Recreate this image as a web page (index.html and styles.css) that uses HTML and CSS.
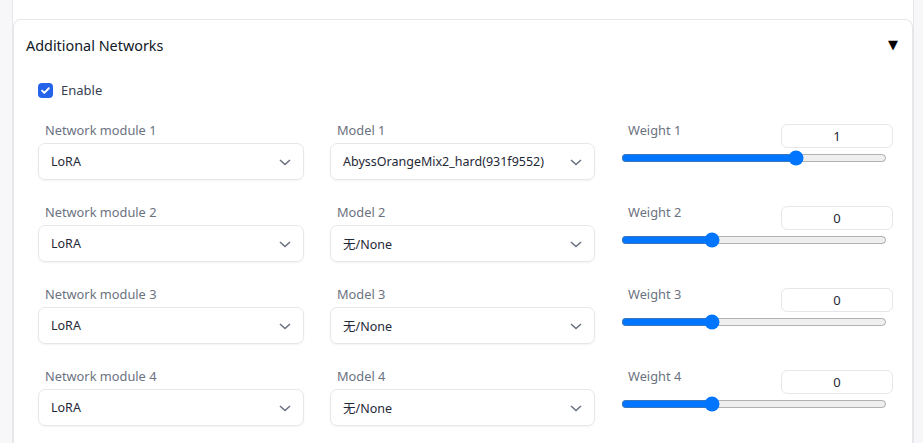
FILE: index.html
```html
<!DOCTYPE html>
<html lang="en">
<head>
<meta charset="utf-8">
<title>Additional Networks</title>
<link rel="stylesheet" href="styles.css">
</head>
<body>
<div class="panel">
  <div class="card">
    <div class="card-head">
      <span class="title">Additional Networks</span>
      <span class="toggle">▼</span>
    </div>
    <div class="card-body">
      <label class="enable">
        <span class="check"><svg width="16" height="16" viewBox="0 0 16 16"><path d="M4.3 8.2l2.4 2.4 4.9-5" fill="none" stroke="#fff" stroke-width="2" stroke-linecap="round" stroke-linejoin="round"/></svg></span>
        <span>Enable</span>
      </label>

      <div class="grid">
        <div class="field">
          <div class="lbl">Network module 1</div>
          <div class="select"><span>LoRA</span><svg class="chev" width="12" height="7" viewBox="0 0 12 7"><path d="M1 1l5 4.5L11 1" fill="none" stroke="#6b7280" stroke-width="1.6"/></svg></div>
        </div>
        <div class="field">
          <div class="lbl">Model 1</div>
          <div class="select"><span>AbyssOrangeMix2_hard(931f9552)</span><svg class="chev" width="12" height="7" viewBox="0 0 12 7"><path d="M1 1l5 4.5L11 1" fill="none" stroke="#6b7280" stroke-width="1.6"/></svg></div>
        </div>
        <div class="field weight">
          <div class="wtop"><span class="lbl">Weight 1</span><span class="num">1</span></div>
          <input class="range" type="range" min="-1" max="2" step="0.05" value="1">
        </div>

        <div class="field">
          <div class="lbl">Network module 2</div>
          <div class="select"><span>LoRA</span><svg class="chev" width="12" height="7" viewBox="0 0 12 7"><path d="M1 1l5 4.5L11 1" fill="none" stroke="#6b7280" stroke-width="1.6"/></svg></div>
        </div>
        <div class="field">
          <div class="lbl">Model 2</div>
          <div class="select"><span>无/None</span><svg class="chev" width="12" height="7" viewBox="0 0 12 7"><path d="M1 1l5 4.5L11 1" fill="none" stroke="#6b7280" stroke-width="1.6"/></svg></div>
        </div>
        <div class="field weight">
          <div class="wtop"><span class="lbl">Weight 2</span><span class="num">0</span></div>
          <input class="range" type="range" min="-1" max="2" step="0.05" value="0">
        </div>

        <div class="field">
          <div class="lbl">Network module 3</div>
          <div class="select"><span>LoRA</span><svg class="chev" width="12" height="7" viewBox="0 0 12 7"><path d="M1 1l5 4.5L11 1" fill="none" stroke="#6b7280" stroke-width="1.6"/></svg></div>
        </div>
        <div class="field">
          <div class="lbl">Model 3</div>
          <div class="select"><span>无/None</span><svg class="chev" width="12" height="7" viewBox="0 0 12 7"><path d="M1 1l5 4.5L11 1" fill="none" stroke="#6b7280" stroke-width="1.6"/></svg></div>
        </div>
        <div class="field weight">
          <div class="wtop"><span class="lbl">Weight 3</span><span class="num">0</span></div>
          <input class="range" type="range" min="-1" max="2" step="0.05" value="0">
        </div>

        <div class="field">
          <div class="lbl">Network module 4</div>
          <div class="select"><span>LoRA</span><svg class="chev" width="12" height="7" viewBox="0 0 12 7"><path d="M1 1l5 4.5L11 1" fill="none" stroke="#6b7280" stroke-width="1.6"/></svg></div>
        </div>
        <div class="field">
          <div class="lbl">Model 4</div>
          <div class="select"><span>无/None</span><svg class="chev" width="12" height="7" viewBox="0 0 12 7"><path d="M1 1l5 4.5L11 1" fill="none" stroke="#6b7280" stroke-width="1.6"/></svg></div>
        </div>
        <div class="field weight">
          <div class="wtop"><span class="lbl">Weight 4</span><span class="num">0</span></div>
          <input class="range" type="range" min="-1" max="2" step="0.05" value="0">
        </div>
      </div>
    </div>
  </div>
</div>
</body>
</html>
```
FILE: styles.css
```css
* { box-sizing: border-box; }
html, body { margin: 0; height: 100%; }
body {
  background: #f7f7f9;
  font-family: "Noto Sans", "Noto Sans CJK SC", sans-serif;
  color: #1f2937;
  overflow: hidden;
}
.panel {
  margin-left: 12px;
  width: 902px;
  height: 100%;
  background: #fff;
  border-left: 1px solid #e5e7eb;
  border-right: 1px solid #e5e7eb;
  padding-top: 19px;
  display: flex;
  flex-direction: column;
}
.card {
  flex: 1;
  min-height: 0;
  overflow: hidden;
  border: 1px solid #e5e7eb;
  border-bottom: none;
  border-radius: 8px 8px 0 0;
}
.card-head {
  display: flex;
  justify-content: space-between;
  align-items: center;
  height: 50px;
  padding: 0 14px 0 12px;
}
.title { font-size: 14.4px; color: #111827; }
.toggle { font-family: "DejaVu Sans", sans-serif; font-size: 13px; color: #000; margin-top: -2px; }
.card-body { padding: 12px 24px 0 24px; }
.enable {
  display: flex;
  align-items: center;
  gap: 8px;
  font-size: 13px;
  color: #374151;
  height: 16px;
}
.check {
  width: 15px; height: 15px;
  border-radius: 4px;
  background: #2563eb;
  display: flex;
  align-items: center;
  justify-content: center;
}
.check svg { width: 15px; height: 15px; }
.grid {
  margin-top: 23px;
  display: grid;
  grid-template-columns: 266px 265px 266px;
  column-gap: 26px;
  row-gap: 23px;
}
.lbl {
  font-size: 12.8px;
  color: #6b7280;
  line-height: 18px;
  padding-left: 7px;
}
.field .lbl { margin-bottom: 4px; }
.select {
  height: 37px;
  border: 1px solid #e5e7eb;
  border-radius: 7px;
  box-shadow: 0 1px 2px rgba(0,0,0,0.05);
  display: flex;
  align-items: center;
  justify-content: space-between;
  padding: 0 12px 0 12px;
  font-size: 12.5px;
  color: #1f2937;
}
.chev { margin-top: 1px; }
.wtop {
  display: flex;
  justify-content: space-between;
  align-items: flex-start;
  height: 29px;
  margin-right: -6px;
}
.wtop .lbl { margin-bottom: 0; padding-left: 7px; }
.num {
  margin-top: 3px;
  width: 112px;
  height: 24px;
  border: 1px solid #e5e7eb;
  border-radius: 6px;
  font-size: 13px;
  color: #1f2937;
  display: flex;
  align-items: center;
  justify-content: center;
}
.range {
  display: block;
  width: 266px;
  margin: 0;
  height: 16px;
  accent-color: #0075ff;
}
```
